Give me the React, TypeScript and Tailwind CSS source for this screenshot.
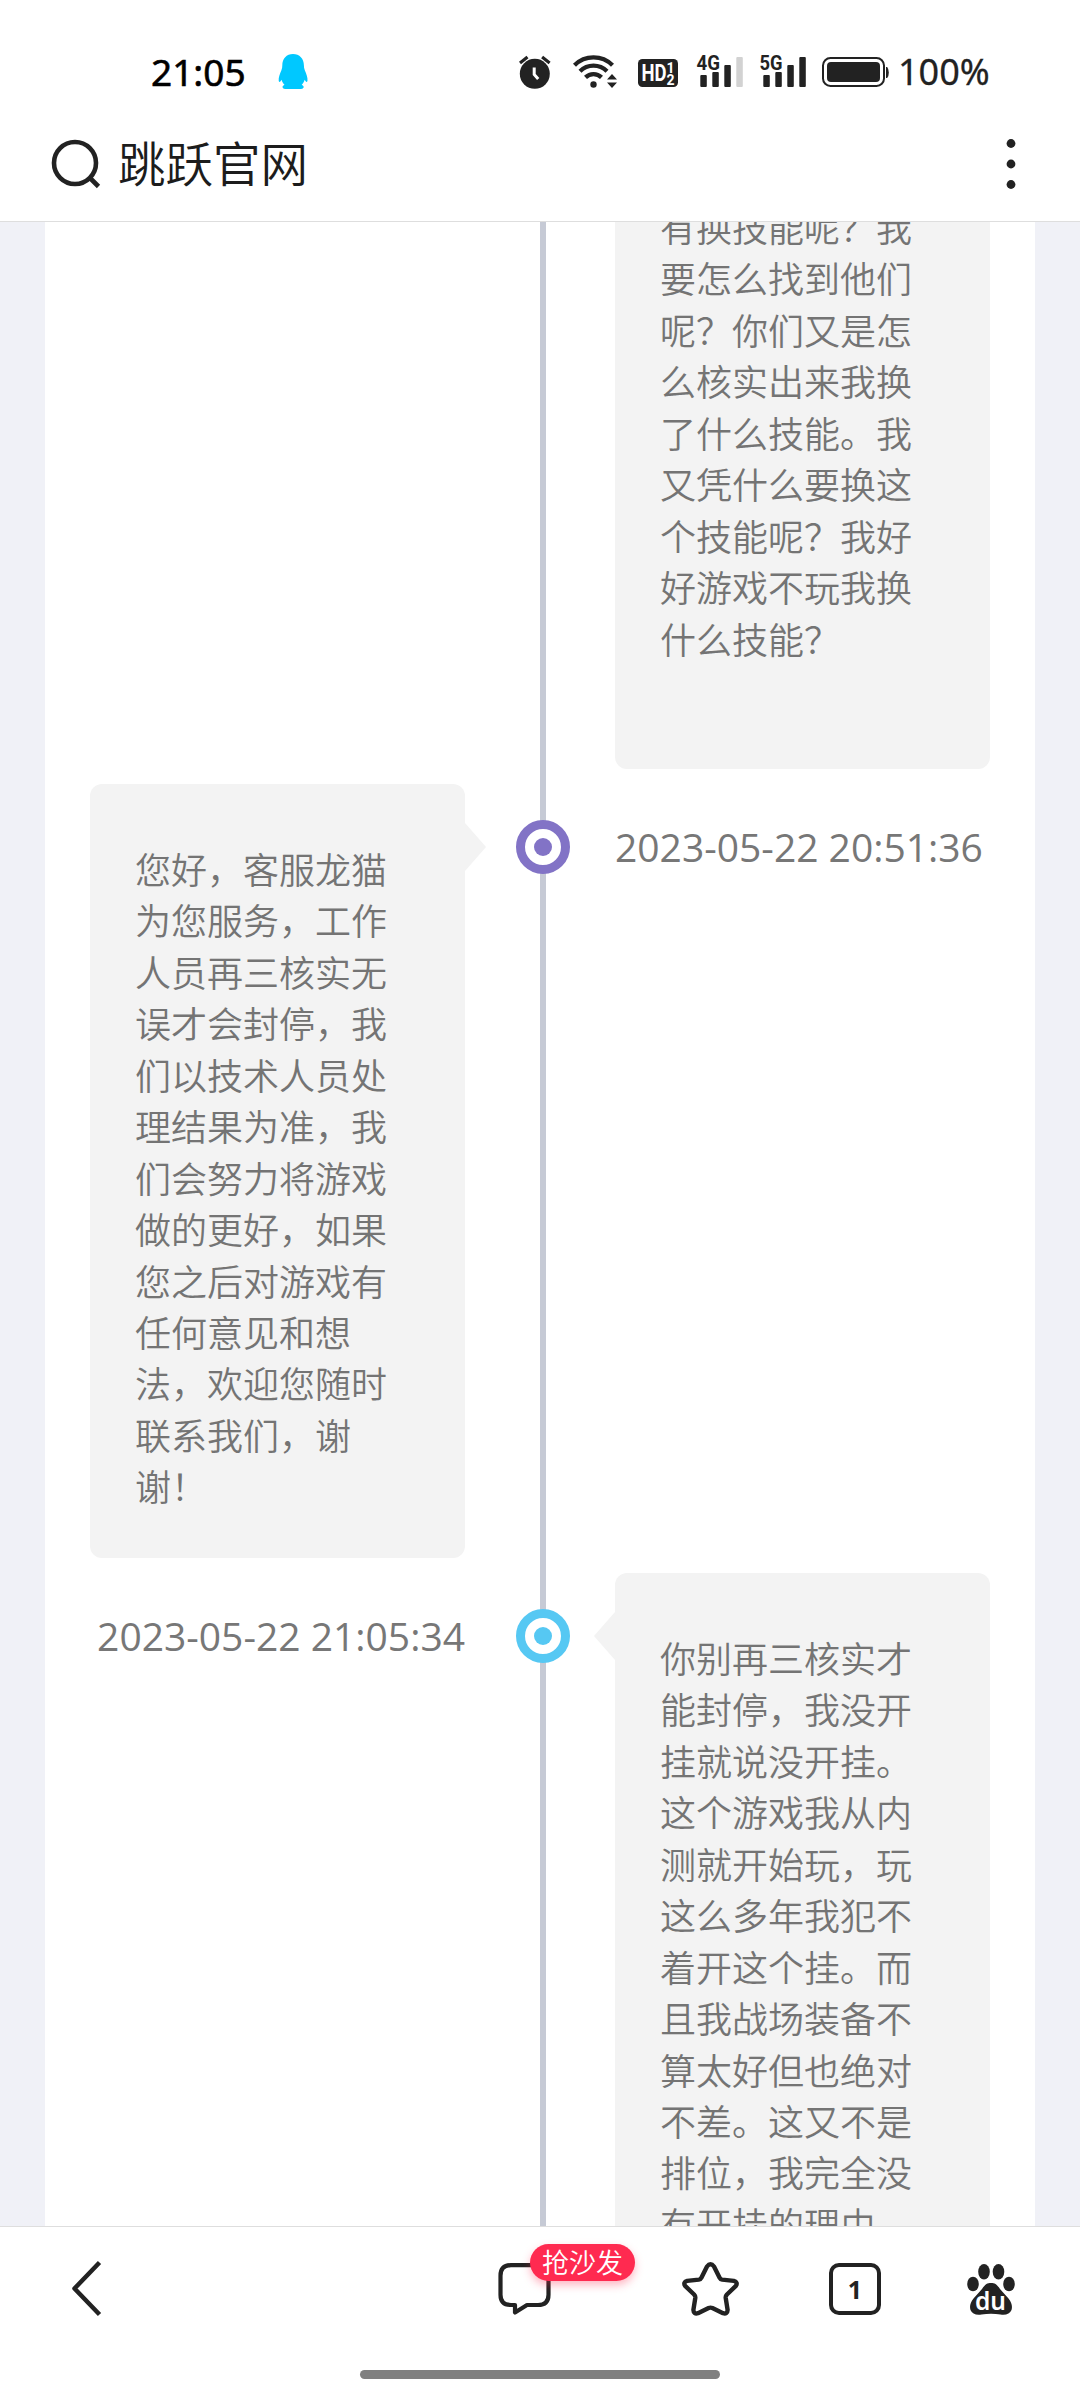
import type { ReactNode } from 'react';

const INK = '#222222';

function Penguin() {
  return (
    <svg className="ml-[32px] h-9 w-[30px]" viewBox="278 55 30 36" fill="#00c8ff">
      <path d="M293 55c-6.500 0-10.700 4.800-10.700 11.300 0 1.700-.2 3.200-.9 4.900-1.600 3.700-3 7.500-2.700 10.400.1 1.600 1.100 1.900 2 .4l.9-1.300c.5 2 1.500 3.600 2.900 5.100-1 .6-1.900 1.200-2 2.100 0 1.700 2.200 2.100 4.500 2.100h12.200c2.300 0 4.500-.4 4.500-2.100-.1-.9-1-1.500-2-2.100 1.400-1.500 2.400-3.100 2.900-5.100l.9 1.300c.9 1.500 1.900 1.200 2-.4.300-2.900-1.100-6.700-2.700-10.400-.7-1.700-.9-3.200-.9-4.900C303.900 59.800 299.500 55 293 55z" />
    </svg>
  );
}

function StatusIcons() {
  return (
    <svg className="-my-[5px] h-[46px] w-[372px] overflow-visible" viewBox="518 49 372 46" fill={INK}>
      <circle cx="534.800" cy="73.800" r="15" />
      <path d="M520 63l7.500-6M549.600 63l-7.500-6" stroke={INK} strokeWidth="3.200" fill="none" />
      <path d="M534.200 67.500v7l4 4.500" stroke="#fff" strokeWidth="3" fill="none" />
      <g fill="none" stroke={INK} strokeWidth="4.300">
        <path d="M574.500 65.200a27 27 0 0 1 38 0" />
        <path d="M580 71.200a19.300 19.300 0 0 1 27 0" />
        <path d="M585.500 77.400a11.500 11.500 0 0 1 16 0" />
      </g>
      <circle cx="593.500" cy="84.500" r="3.200" />
      <path d="M607 79.500l5-5.500 5 5.500zM607 82.500l5 5.500 5-5.500z" />
      <rect x="638" y="59" width="40" height="28" rx="4.500" />
      <text x="641.500" y="81" fill="#fff" fontSize="23" fontWeight="700" textLength="25" lengthAdjust="spacingAndGlyphs" className="font-['Roboto']">HD</text>
      <text x="666.500" y="72.500" fill="#fff" fontSize="14" fontWeight="700" className="font-['Roboto']">1</text>
      <text x="666.500" y="84.500" fill="#fff" fontSize="14" fontWeight="700" className="font-['Roboto']">2</text>
      <text x="696.500" y="70" fontSize="21" fontWeight="700" textLength="23.500" lengthAdjust="spacingAndGlyphs" className="font-['Roboto']">4G</text>
      <text x="759.500" y="70" fontSize="21" fontWeight="700" textLength="23" lengthAdjust="spacingAndGlyphs" className="font-['Roboto']">5G</text>
      <rect x="700.300" y="75" width="6.500" height="12" rx="1" />
      <rect x="712.300" y="72" width="6.500" height="15" rx="1" />
      <rect x="724.300" y="65" width="6.500" height="22" rx="1" />
      <rect x="736.300" y="57" width="6.500" height="30" rx="1" fill="#d2d2d2" />
      <rect x="763.300" y="75" width="6.500" height="12" rx="1" />
      <rect x="775.300" y="72" width="6.500" height="15" rx="1" />
      <rect x="787.300" y="65" width="6.500" height="22" rx="1" />
      <rect x="799.300" y="57" width="6.500" height="30" rx="1" />
      <rect x="823" y="58" width="61" height="28" rx="7.500" fill="none" stroke={INK} strokeWidth="2" />
      <rect x="827" y="62" width="53" height="20" rx="4" />
      <path d="M886 67h1.200q1.600 2 1.600 5.500t-1.600 5.500H886z" />
    </svg>
  );
}

function Node({ tone }: { tone: string }) {
  return (
    <div className={`flex h-[54px] w-[54px] items-center justify-center rounded-full border-[9px] bg-white ${tone}`}>
      <div className="h-[18px] w-[18px] rounded-full bg-current" />
    </div>
  );
}

function Card({ lines, className = '', children }: { lines: string[]; className?: string; children?: ReactNode }) {
  return (
    <div className={`relative w-[375px] rounded-xl bg-[#f3f3f3] px-[45px] pt-[59px] text-[36px] leading-[51.43px] font-[350] whitespace-nowrap text-[#747474] ${className}`}>
      {children}
      {lines.map((line) => (
        <p key={line}>{line}</p>
      ))}
    </div>
  );
}

const firstReply = ['有换技能呢？我', '要怎么找到他们', '呢？你们又是怎', '么核实出来我换', '了什么技能。我', '又凭什么要换这', '个技能呢？我好', '好游戏不玩我换', '什么技能？'];
const support = ['您好，客服龙猫', '为您服务，工作', '人员再三核实无', '误才会封停，我', '们以技术人员处', '理结果为准，我', '们会努力将游戏', '做的更好，如果', '您之后对游戏有', '任何意见和想', '法，欢迎您随时', '联系我们，谢', '谢！'];
const secondReply = ['你别再三核实才', '能封停，我没开', '挂就说没开挂。', '这个游戏我从内', '测就开始玩，玩', '这么多年我犯不', '着开这个挂。而', '且我战场装备不', '算太好但也绝对', '不差。这又不是', '排位，我完全没', '有开挂的理由，'];

const dateClass = "font-['Open_Sans','Noto_Sans',sans-serif] text-[39px] leading-[54px] whitespace-nowrap text-[#777]";

export default function App() {
  return (
    <div className="flex h-[2400px] w-[1080px] flex-col overflow-hidden bg-white font-['Noto_Sans_CJK_SC',sans-serif]">
      <header className="h-[222px] shrink-0 border-b border-[#dedede]">
        <div className="flex h-[112px] items-start justify-between pt-[54px] pr-[89px] pl-[151px]">
          <div className="flex h-9 items-center">
            <span className="w-[95px] font-['Noto_Sans',sans-serif] text-[37px] leading-9 whitespace-nowrap text-black [-webkit-text-stroke:0.6px_#000]">21:05</span>
            <Penguin />
          </div>
          <div className="flex h-9 items-center">
            <StatusIcons />
            <span className="ml-[8px] w-[93px] font-['Noto_Sans',sans-serif] text-[36px] leading-9 whitespace-nowrap text-[#222] [-webkit-text-stroke:0.3px_#222]">100%</span>
          </div>
        </div>
        <div className="flex h-[104px] items-center justify-between pr-[60px] pl-[50px]">
          <div className="flex items-center">
            <svg className="h-[52px] w-[52px]" viewBox="50 138 52 52" fill="none" stroke={INK} strokeWidth="4.600">
              <circle cx="75" cy="163" r="21" />
              <path d="M90 178l8.500 8.500" />
            </svg>
            <span className="-mt-1 ml-4 text-[47.500px] leading-[52px] font-[350] text-[#1c1c1c]">跳跃官网</span>
          </div>
          <svg className="h-[52px] w-[18px]" viewBox="0 0 18 52" fill={INK}>
            <circle cx="9" cy="5.500" r="4.400" />
            <circle cx="9" cy="26" r="4.400" />
            <circle cx="9" cy="46.500" r="4.400" />
          </svg>
        </div>
      </header>

      <main className="h-[2004px] shrink-0 overflow-hidden bg-[#f0f1f7] px-[45px]">
        <div className="relative flex h-full flex-col bg-white px-[45px]">
          <div className="absolute top-0 left-[495px] h-full w-1.5 bg-[#c6cad5]" />
          <div className="flex justify-end">
            <Card lines={firstReply} className="-mt-[80px] h-[627px]" />
          </div>
          <div className="relative mt-[15px] grid h-[774px] grid-cols-[375px_150px_375px] items-start">
            <Card lines={support} className="h-[774px]">
              <div className="absolute top-[39px] left-full border-y-[24px] border-l-[21px] border-y-transparent border-l-[#f3f3f3]" />
            </Card>
            <div className="flex justify-center pt-9 pl-1.5">
              <Node tone="border-[#8273c6] text-[#8273c6]" />
            </div>
            <time className={`mt-9 ${dateClass}`}>2023-05-22 20:51:36</time>
          </div>
          <div className="relative mt-[15px] grid grid-cols-[375px_150px_375px] items-start">
            <time className={`mt-9 text-right ${dateClass}`}>2023-05-22 21:05:34</time>
            <div className="flex justify-center pt-9 pl-1.5">
              <Node tone="border-[#56c8f3] text-[#56c8f3]" />
            </div>
            <Card lines={secondReply} className="h-[720px]">
              <div className="absolute top-[39px] right-full border-y-[24px] border-r-[21px] border-y-transparent border-r-[#f3f3f3]" />
            </Card>
          </div>
        </div>
      </main>

      <footer className="flex grow flex-col items-center justify-between border-t border-[#dedede] bg-white pb-[21px]">
        <nav className="flex h-[124px] w-full items-center pl-[68px]">
          <svg className="h-[60px] w-9" viewBox="68 2259 36 60" fill="none" stroke={INK} strokeWidth="4.500" strokeLinejoin="round">
            <path d="M99.500 2262.500L74.500 2288.500L99.500 2314.500" />
          </svg>
          <div className="relative ml-[390px]">
            <svg className="h-[60px] w-[60px]" viewBox="494 2259 60 60" fill="none" stroke={INK} strokeWidth="4.200" strokeLinejoin="round">
              <path d="M511 2265.200h27q10.500 0 10.500 10.500v19q0 10.300-10.500 10.300h-11l-12 7.500v-7.500h-4q-10.500 0-10.500-10.300v-19q0-10.500 10.500-10.500z" />
            </svg>
            <span className="absolute -top-[15px] left-9 flex h-[37px] w-[105px] items-center justify-center rounded-full bg-[#ff2a50] text-[27px] leading-[37px] whitespace-nowrap text-white shadow-[0_4px_8px_rgba(255,42,80,0.35)]">
              <span className="-mt-0.5 font-[350]">抢沙发</span>
            </span>
          </div>
          <svg className="ml-[126px] h-[60px] w-[60px]" viewBox="680 2259 60 60" fill="none" stroke={INK} strokeWidth="4.400" strokeLinejoin="round">
            <path d="M707 2266.500q3.500-4.500 7 0l5.600 11.200q.8 1.600 2.600 1.900l11.600 1.300q4.400 1.400 2.100 5l-9 8.600q-1.400 1.500-1.200 3.300l1.900 12q-.2 4.600-4.600 3.400l-10.600-5.200q-1.900-.8-3.800 0l-10.600 5.200q-4.400 1.200-4.600-3.400l1.900-12q.2-1.800-1.200-3.300l-9-8.600q-2.300-3.600 2.100-5l11.600-1.300q1.800-.3 2.600-1.900z" />
          </svg>
          <div className="ml-[89px] flex h-[52px] w-[52px] items-center justify-center rounded-[10px] border-4 border-[#222] font-['Noto_Sans',sans-serif] text-[25px] leading-none font-bold text-[#222]">1</div>
          <svg className="ml-[83px] h-[60px] w-[54px] overflow-visible" viewBox="964 2259 54 60" fill={INK}>
            <ellipse cx="984" cy="2271.800" rx="5.800" ry="7.700" />
            <ellipse cx="998.500" cy="2271.800" rx="5.800" ry="7.700" />
            <ellipse cx="973" cy="2284" rx="5.800" ry="7.300" />
            <ellipse cx="1009" cy="2284" rx="5.800" ry="7.300" />
            <path d="M991 2283c4 0 6 1.500 9 6l8.500 9.500c3.500 4.500 4 8 3 11.500-1.500 4-6 5.500-11 4.500-6-1-13-1-19 0-5 1-9.500-.5-11-4.500-1-3.500-.5-7 3-11.500l8.500-9.500c3-4.500 5-6 9-6z" />
            <text x="975" y="2310" fill="#fff" fontSize="25" fontWeight="600" textLength="31" lengthAdjust="spacingAndGlyphs" className="font-['Noto_Sans',sans-serif]">du</text>
          </svg>
        </nav>
        <div className="h-[9px] w-[360px] rounded-full bg-[#808080]" />
      </footer>
    </div>
  );
}
